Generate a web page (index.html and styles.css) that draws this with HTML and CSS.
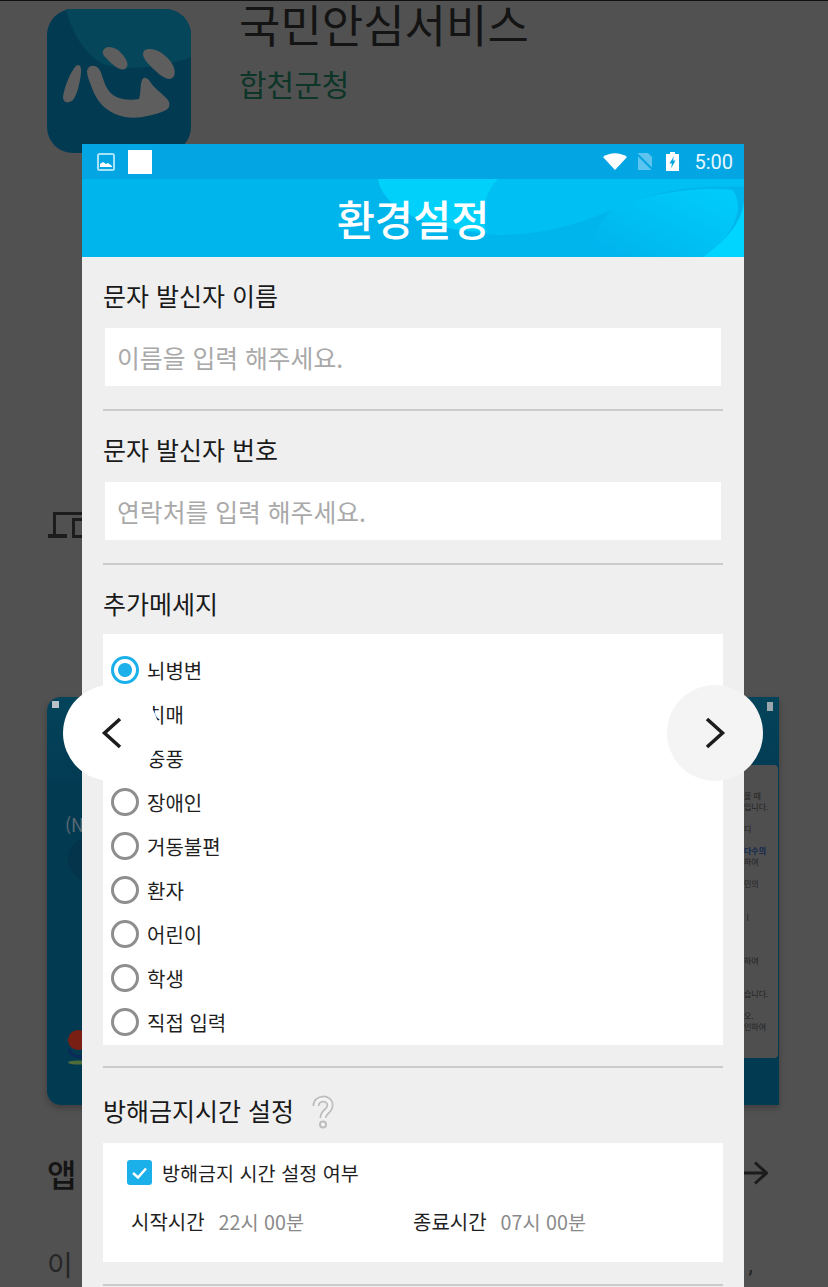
FILE: index.html
```html
<!DOCTYPE html>
<html lang="ko">
<head>
  <meta charset="UTF-8">
  <meta name="viewport" content="width=device-width, initial-scale=1.0">
  <title>환경설정</title>
  <link rel="stylesheet" href="styles.css">
</head>
<body>
<div class="store">
  <header class="app-head">
    <svg class="app-icon" viewBox="0 0 144 144">
      <rect width="144" height="144" rx="26" fill="#023a52"/>
      <path d="M19 0h99a26 26 0 0 1 26 26v22c-25 10-60 14-85 8C38 48 24 22 19 0z" fill="#05465a"/>
      <path d="M56 42C58 36 68 37 74 44C80 50 83 57 78 60C72 62 66 56 61 51C57 47 55 45 56 42z" fill="#5e5e5e"/>
      <path d="M96 44C97 38 108 39 116 45C124 51 130 60 127 67C124 72 118 70 112 65C105 59 95 50 96 44z" fill="#5e5e5e"/>
      <path d="M16 88C17 78 24 62 29 57C32 54 35 58 34 64C33 74 30 86 26 91C21 95 16 94 16 88z" fill="#5e5e5e"/>
      <path d="M40 62C41 56 48 55 52 60C56 66 56 74 62 82C68 90 80 92 92 90C94 84 93 76 95 71C97 67 101 69 104 74C108 80 116 85 121 91C124 96 122 100 117 102C105 107 90 110 78 108C62 105 52 95 47 84C44 76 40 68 40 62z" fill="#5e5e5e"/>
    </svg>
    <div class="app-meta">
      <h1 class="app-name">국민안심서비스</h1>
      <p class="app-org">합천군청</p>
    </div>
  </header>

  <svg class="device-icon" viewBox="0 0 34 26">
    <path d="M6.500 0V22M5 1.500H34" fill="none" stroke="#1c1c1c" stroke-width="3"/>
    <path d="M0 24H19" fill="none" stroke="#1c1c1c" stroke-width="4"/>
    <rect x="25.500" y="7.500" width="10" height="17" fill="none" stroke="#1c1c1c" stroke-width="3"/>
  </svg>

  <div class="shot">
    <span class="shot-pic"></span>
    <span class="shot-batt"></span>
    <span class="shot-note">(N</span>
    <span class="shot-round"></span>
    <svg class="shot-logo" viewBox="0 0 16 44">
      <path d="M1 26C1 34 8 37 16 36V33C9 34 4 31 3 26z" fill="#0a2a5a"/>
      <circle cx="11" cy="18" r="10" fill="#7a1f14"/>
      <ellipse cx="11" cy="40.500" rx="10" ry="2" fill="#4f6b3a"/>
    </svg>
    <div class="shot-card">
      <p>을 때<br>입니다.</p>
      <p>디</p>
      <p><b>다수의</b><br>하여</p>
      <p>민의<br>&nbsp;</p>
      <p>ㅣ<br>&nbsp;<br>&nbsp;</p>
      <p>하여<br>&nbsp;</p>
      <p>습니다.</p>
      <p>오.<br>인하여</p>
    </div>
  </div>

  <div class="about-head">
    <h2>앱</h2>
    <svg class="about-arrow" viewBox="0 0 24 24">
      <path d="M0 12H22M11 1.500L22.500 12L11 22.500" fill="none" stroke="#1c1c1c" stroke-width="3"/>
    </svg>
  </div>
  <p class="about-text"><span>이 </span><span class="comma">,</span></p>
</div>

<div class="dialog">
  <div class="status-bar">
    <svg class="st-pic" viewBox="0 0 18 18">
      <rect x="1" y="1" width="16" height="16" rx="1.500" fill="none" stroke="#a6e2f8" stroke-width="2"/>
      <path d="M3 14v-3l3-2 3 2 2-1 4 3v1z" fill="#fff"/>
    </svg>
    <span class="st-blank"></span>
    <span class="st-space"></span>
    <svg class="st-wifi" viewBox="0 0 24 17"><path d="M0 4C7-1 17-1 24 4L12 17z" fill="#fff"/></svg>
    <svg class="st-sim" viewBox="0 0 17 17">
      <path d="M2 0h10l4 4v13H2z" fill="#5cc4ee"/>
      <path d="M0 0l17 17" stroke="#03a5e3" stroke-width="2"/>
    </svg>
    <svg class="st-batt" viewBox="0 0 13 19">
      <path d="M4 0h5v2h4v17H0V2h4z" fill="#fff"/>
      <path d="M8 4L3.500 11.500h2.500L5 16.500 9.500 8.500H7z" fill="#03a5e3"/>
    </svg>
    <span class="st-time">5:00</span>
  </div>

  <div class="title-bar">
    <svg class="title-blobs" viewBox="0 0 662 78" preserveAspectRatio="none">
      <defs>
        <linearGradient id="blobFade" x1="0.1" y1="0.9" x2="0.9" y2="0.2">
          <stop offset="0" stop-color="#00b4ec"/>
          <stop offset="1" stop-color="#00caf9"/>
        </linearGradient>
      </defs>
      <path d="M296 0C300 28 340 50 415 56C470 56 510 40 540 26C580 10 620 6 662 8V0z" fill="#00bff3"/>
      <path d="M296 0C300 28 345 52 405 53C398 35 402 15 416 0z" fill="#00d0fa"/>
      <path d="M531 30C570 12 620 8 651 11C664 30 650 60 621 78H500C510 60 515 45 531 30z" fill="url(#blobFade)"/>
      <path d="M662 22C660 45 640 65 621 78H662z" fill="#00d5ff"/>
    </svg>
    <h2>환경설정</h2>
  </div>

  <div class="dialog-body">
    <section class="group">
      <h3 class="group-title">문자 발신자 이름</h3>
      <div class="field">이름을 입력 해주세요.</div>
    </section>
    <section class="group">
      <h3 class="group-title">문자 발신자 번호</h3>
      <div class="field">연락처를 입력 해주세요.</div>
    </section>
    <section class="group tight">
      <h3 class="group-title">추가메세지</h3>
      <div class="panel radios">
        <div class="radio on"><i></i>뇌병변</div>
        <div class="radio"><i></i>치매</div>
        <div class="radio"><i></i>중풍</div>
        <div class="radio"><i></i>장애인</div>
        <div class="radio"><i></i>거동불편</div>
        <div class="radio"><i></i>환자</div>
        <div class="radio"><i></i>어린이</div>
        <div class="radio"><i></i>학생</div>
        <div class="radio"><i></i>직접 입력</div>
      </div>
    </section>
    <section class="group wide">
      <h3 class="group-title">방해금지시간 설정
        <svg class="help" viewBox="0 0 22 34">
          <path d="M4 11C4 2 18 2 18 10C18 17 11 16 11 23" fill="none" stroke="#bdbdbd" stroke-width="7"/>
          <path d="M4 11C4 2 18 2 18 10C18 17 11 16 11 23" fill="none" stroke="#f4f4f4" stroke-width="3.500"/>
          <circle cx="11" cy="29.500" r="3" fill="#f4f4f4" stroke="#bdbdbd" stroke-width="2"/>
        </svg>
      </h3>
      <div class="panel quiet">
        <div class="check-row">
          <svg class="check" viewBox="0 0 25 25">
            <rect width="25" height="25" rx="3" fill="#1bb0ea"/>
            <path d="M6 13l5 4.500 8-9" fill="none" stroke="#fff" stroke-width="2.500"/>
          </svg>
          방해금지 시간 설정 여부
        </div>
        <div class="time-row">
          <div class="time"><span>시작시간</span><em>22시 00분</em></div>
          <div class="time"><span>종료시간</span><em>07시 00분</em></div>
        </div>
      </div>
    </section>
  </div>
</div>

<button class="nav-btn prev">
  <svg viewBox="0 0 21 32"><path d="M19 2L3.500 16 19 30" fill="none" stroke="#1c1c1c" stroke-width="3.500"/></svg>
</button>
<button class="nav-btn next">
  <svg viewBox="0 0 21 32"><path d="M2 2l15.500 14L2 30" fill="none" stroke="#1c1c1c" stroke-width="3.500"/></svg>
</button>
</body>
</html>
```

FILE: styles.css
```css
* {
    margin: 0;
    padding: 0;
    box-sizing: border-box;
    font-family: 'Noto Sans CJK KR', 'Noto Sans', sans-serif;
}

html, body {
    height: 1287px;
    overflow: hidden;
}

body {
    position: relative;
    background-color: #515151;
    color: #1a1a1a;
    border-top: 1px solid #111;
}

/* dimmed store page behind the dialog */
.store {
    height: 1286px;
    padding: 8px 48px 0 47px;
}

.app-head {
    display: flex;
    gap: 49px;
    height: 144px;
}

.app-icon {
    width: 144px;
    height: 144px;
    flex: none;
}

.app-meta {
    margin-left: -1px;
}

.app-name {
    font-size: 45px;
    font-weight: 400;
    line-height: 48px;
    margin-top: -9px;
    color: #141414;
}

.app-org {
    font-size: 30px;
    line-height: 40px;
    margin-top: 15px;
    color: #0d3528;
}

.device-icon {
    display: block;
    width: 34px;
    height: 26px;
    margin: 359px 0 0 1px;
}

.shot {
    position: relative;
    width: 732px;
    height: 408px;
    margin-top: 159px;
    background: linear-gradient(#04445b, #023a52 90px);
    border-radius: 14px 0 0 14px;
    box-shadow: 0 3px 6px rgba(0,0,0,0.25);
}

.shot-pic {
    position: absolute;
    left: 5px;
    top: 4px;
    width: 7px;
    height: 7px;
    background-color: #b9c3c7;
}

.shot-batt {
    position: absolute;
    right: 6px;
    top: 5px;
    width: 6px;
    height: 9px;
    background-color: #9aa8ad;
}

.shot-note {
    position: absolute;
    left: 18px;
    top: 114px;
    font-size: 18px;
    color: #5d6b72;
}

.shot-round {
    position: absolute;
    left: 21px;
    top: 140px;
    width: 44px;
    height: 44px;
    border-radius: 50%;
    background-color: #03344b;
}

.shot-logo {
    position: absolute;
    left: 20px;
    top: 325px;
    width: 16px;
    height: 44px;
}

.shot-card {
    position: absolute;
    right: 1px;
    top: 68px;
    width: 100px;
    height: 293px;
    padding: 25px 0 0 66px;
    background-color: #4f4f4f;
    border-radius: 4px;
    font-size: 8px;
    line-height: 11px;
    color: #222;
    white-space: nowrap;
}

.shot-card p {
    margin-bottom: 11px;
}

.shot-card b {
    color: #12294d;
}

.about-head {
    display: flex;
    justify-content: space-between;
    align-items: center;
    margin-top: 45px;
    height: 46px;
    padding-right: 12px;
}

.about-head h2 {
    font-size: 32px;
    font-weight: 500;
    color: #141414;
}

.about-arrow {
    width: 24px;
    height: 24px;
}

.about-text {
    display: flex;
    justify-content: space-between;
    margin-top: 48px;
    padding-right: 27px;
    font-size: 28px;
    color: #262626;
}

.comma {
    margin-top: 7px;
    font-family: Roboto, sans-serif;
    font-size: 24px;
}

/* settings dialog */
.dialog {
    position: absolute;
    left: 82px;
    top: 143px;
    width: 662px;
    height: 1143px;
    background-color: #efefef;
    overflow: hidden;
}

.status-bar {
    display: flex;
    align-items: center;
    height: 35px;
    padding: 0 11px 0 15px;
    background-color: #03a5e3;
}

.st-pic {
    width: 18px;
    height: 18px;
}

.st-blank {
    width: 24px;
    height: 24px;
    margin-left: 13px;
    background-color: #fff;
}

.st-space {
    flex: 1;
}

.st-wifi {
    width: 24px;
    height: 17px;
}

.st-sim {
    width: 17px;
    height: 17px;
    margin-left: 9px;
}

.st-batt {
    width: 13px;
    height: 19px;
    margin-left: 13px;
}

.st-time {
    margin-left: 15px;
    font-family: Roboto, sans-serif;
    font-size: 20px;
    color: #e8f7fd;
}

.title-bar {
    position: relative;
    height: 78px;
    background-color: #00b4ec;
    text-align: center;
    overflow: hidden;
}

.title-blobs {
    position: absolute;
    left: 0;
    top: 0;
    width: 100%;
    height: 100%;
}

.title-bar h2 {
    position: relative;
    font-size: 41.500px;
    font-weight: 500;
    line-height: 78px;
    color: #fff;
}

.dialog-body {
    padding: 0 21px;
}

.group {
    border-bottom: 2px solid #cbcbcb;
    padding-bottom: 23px;
}

.group-title {
    display: flex;
    align-items: flex-start;
    gap: 18px;
    font-size: 25px;
    font-weight: 400;
    line-height: 36px;
    padding-top: 20px;
    height: 71px;
    color: #1a1a1a;
}

.group.tight {
    padding-bottom: 21px;
}

.group.tight .group-title {
    height: 69px;
}

.group.wide {
    padding-bottom: 22px;
}

.group.wide .group-title {
    height: 75px;
    padding-top: 24px;
}

.field {
    height: 58px;
    margin: 0 2px;
    padding-left: 12px;
    background-color: #fff;
    font-size: 24.800px;
    line-height: 58px;
    color: #a9a9a9;
}

.panel {
    background-color: #fff;
}

.radios {
    height: 411px;
    padding: 14px 0 0 8px;
}

.radio {
    display: flex;
    align-items: center;
    gap: 8px;
    height: 44px;
    font-size: 20px;
    color: #1f1f1f;
}

.radio i {
    width: 28px;
    height: 28px;
    border: 3px solid #8e8e8e;
    border-radius: 50%;
    flex: none;
}

.radio.on i {
    border-color: #1bb0ea;
    background: radial-gradient(circle, #1bb0ea 0 6.500px, #fff 7.500px);
}

.help {
    width: 22px;
    height: 34px;
    margin-top: 3px;
    flex: none;
}

.quiet {
    height: 119px;
    padding: 16px 28px 0 24px;
}

.check-row {
    display: flex;
    align-items: center;
    gap: 10px;
    height: 27px;
    font-size: 19.600px;
    color: #1f1f1f;
}

.check {
    width: 25px;
    height: 25px;
}

.time-row {
    display: grid;
    grid-template-columns: 282px 1fr;
    margin-top: 22px;
    padding-left: 4px;
}

.time {
    display: flex;
    gap: 14px;
    font-size: 20px;
    line-height: 28px;
    color: #1f1f1f;
}

.time em {
    font-style: normal;
    font-size: 19.700px;
    color: #8a8a8a;
}

/* pager arrows over the dialog */
.nav-btn {
    position: absolute;
    top: 684px;
    width: 96px;
    height: 96px;
    border: none;
    border-radius: 50%;
    display: flex;
    align-items: center;
    justify-content: center;
}

.nav-btn svg {
    width: 21px;
    height: 32px;
}

.nav-btn.prev {
    left: 63px;
    background-color: #fff;
}

.nav-btn.next {
    left: 667px;
    background-color: #f4f4f4;
}
```
